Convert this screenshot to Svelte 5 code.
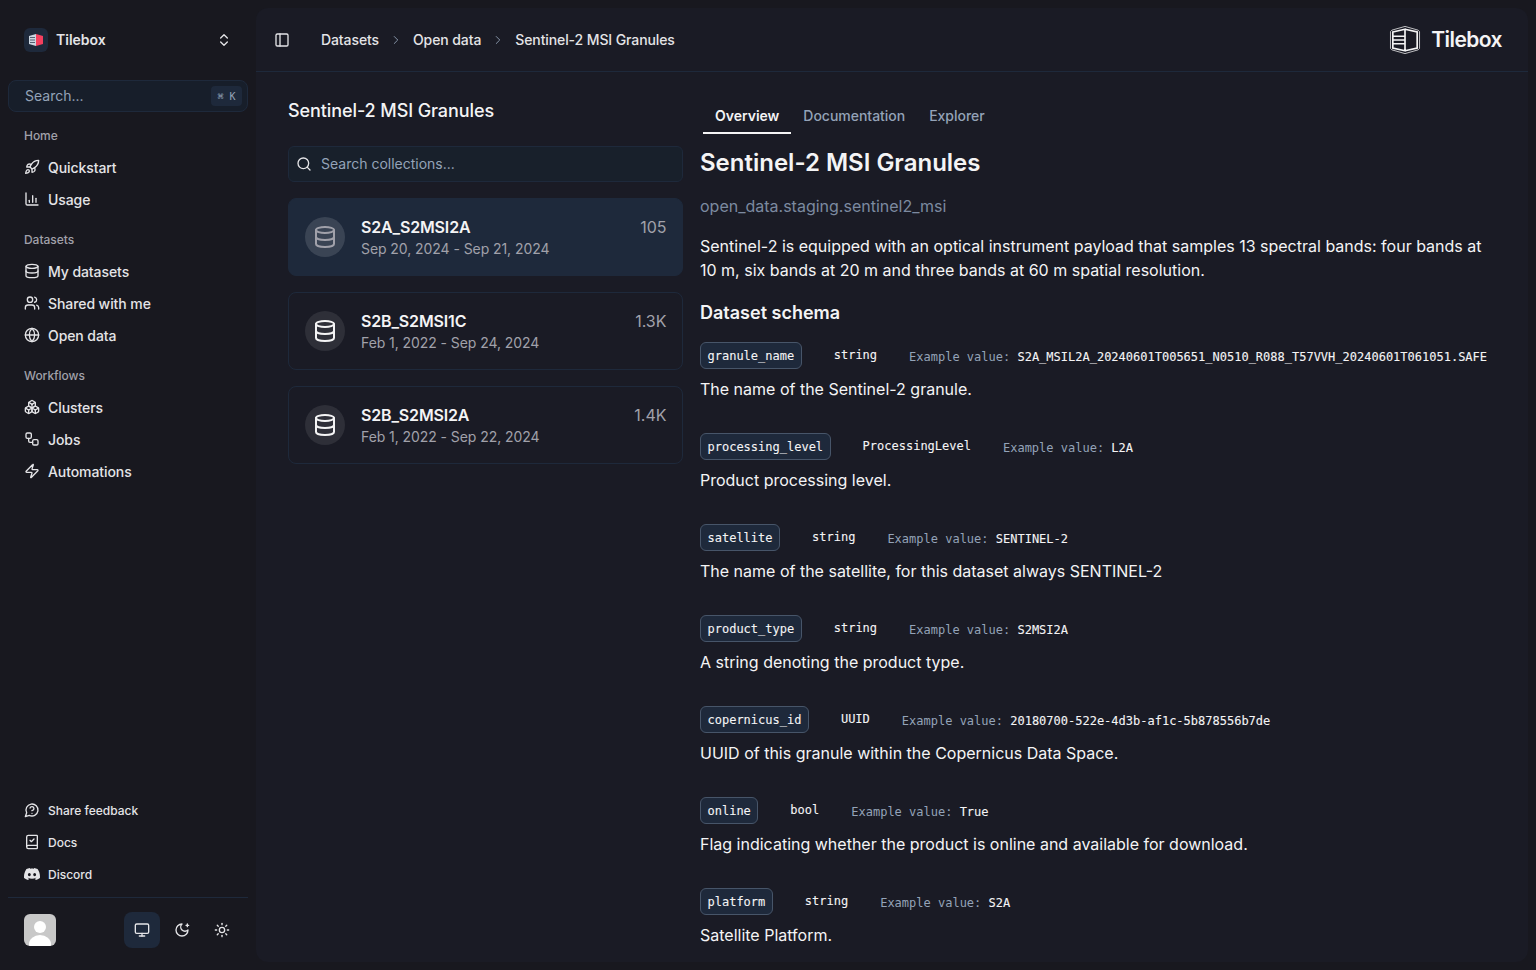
<script>
  const c = (x, y, r) => `M${x - r} ${y}a${r} ${r} 0 1 0 ${2 * r} 0a${r} ${r} 0 1 0 ${-2 * r} 0Z`;
  const rr = (x, y, w, h, r) =>
    `M${x + r} ${y}h${w - 2 * r}a${r} ${r} 0 0 1 ${r} ${r}v${h - 2 * r}a${r} ${r} 0 0 1 ${-r} ${r}h${-(w - 2 * r)}a${r} ${r} 0 0 1 ${-r} ${-r}v${-(h - 2 * r)}a${r} ${r} 0 0 1 ${r} ${-r}Z`;

  const icons = {
    rocket: ['M4.5 16.5c-1.5 1.26-2 5-2 5s3.74-.5 5-2c.71-.84.7-2.13-.09-2.91a2.18 2.18 0 0 0-2.91-.09z', 'm12 15-3-3a22 22 0 0 1 2-3.95A12.88 12.88 0 0 1 22 2c0 2.72-.78 7.5-6 11a22.35 22.35 0 0 1-4 2z', 'M9 12H4s.55-3.03 2-4c1.62-1.08 5 0 5 0', 'M12 15v5s3.03-.55 4-2c1.08-1.62 0-5 0-5'],
    chart: ['M3 3v16a2 2 0 0 0 2 2h16', 'M8 17v-3', 'M13 17V7', 'M18 17V11'],
    database: ['M3 5a9 3 0 1 0 18 0a9 3 0 1 0 -18 0Z', 'M3 5V19A9 3 0 0 0 21 19V5', 'M3 12A9 3 0 0 0 21 12'],
    users: ['M16 21v-2a4 4 0 0 0-4-4H6a4 4 0 0 0-4 4v2', c(9, 7, 4), 'M22 21v-2a4 4 0 0 0-3-3.87', 'M16 3.13a4 4 0 0 1 0 7.75'],
    globe: [c(12, 12, 10), 'M12 2a14.5 14.5 0 0 0 0 20 14.5 14.5 0 0 0 0-20', 'M2 12h20'],
    boxes: ['M2.97 12.92A2 2 0 0 0 2 14.63v3.24a2 2 0 0 0 .97 1.71l3 1.8a2 2 0 0 0 2.06 0L12 19v-5.5l-5-3-4.03 2.42Z', 'm7 16.5-4.74-2.85', 'm7 16.5 5-3', 'M7 16.5v5.17', 'M12 13.5V19l3.97 2.38a2 2 0 0 0 2.06 0l3-1.8a2 2 0 0 0 .97-1.71v-3.24a2 2 0 0 0-.97-1.71L17 10.5l-5 3Z', 'm17 16.5-5-3', 'm17 16.5 4.74-2.85', 'M17 16.5v5.17', 'M7.97 4.42A2 2 0 0 0 7 6.13v4.37l5 3 5-3V6.13a2 2 0 0 0-.97-1.71l-3-1.8a2 2 0 0 0-2.06 0l-3 1.8Z', 'M12 8 7.26 5.15', 'm12 8 4.74-2.85', 'M12 13.5V8'],
    workflow: [rr(3, 3, 8, 8, 2), 'M7 11v4a2 2 0 0 0 2 2h4', rr(13, 13, 8, 8, 2)],
    zap: ['M4 14a1 1 0 0 1-.78-1.63l9.9-10.2a.5.5 0 0 1 .86.46l-1.92 6.02A1 1 0 0 0 13 10h7a1 1 0 0 1 .78 1.63l-9.9 10.2a.5.5 0 0 1-.86-.46l1.92-6.02A1 1 0 0 0 11 14z'],
    help: ['M7.9 20A9 9 0 1 0 4 16.1L2 22Z', 'M9.09 9a3 3 0 0 1 5.83 1c0 2-3 3-3 3', 'M12 17h.01'],
    book: ['M4 19.5v-15A2.5 2.5 0 0 1 6.5 2H19a1 1 0 0 1 1 1v18a1 1 0 0 1-1 1H6.5a1 1 0 0 1 0-5H20', 'm9 9.5 2 2 4-4'],
    monitor: [rr(2, 3, 20, 14, 2), 'M8 21h8', 'M12 17v4'],
    moon: ['M12 3a6 6 0 0 0 9 9 9 9 0 1 1-9-9Z', 'M20 3v4', 'M22 5h-4'],
    sun: [c(12, 12, 4), 'M12 2v2', 'M12 20v2', 'm4.93 4.93 1.41 1.41', 'm17.66 17.66 1.41 1.41', 'M2 12h2', 'M20 12h2', 'm6.34 17.66-1.41 1.41', 'm19.07 4.93-1.41 1.41'],
    panel: [rr(3, 3, 18, 18, 2), 'M9 3v18'],
    updown: ['m7 15 5 5 5-5', 'm7 9 5-5 5 5'],
    search: [c(11, 11, 8), 'm21 21-4.3-4.3'],
    right: ['m9 18 6-6-6-6']
  };
  const discord = 'M20.317 4.3698a19.7913 19.7913 0 00-4.8851-1.5152.0741.0741 0 00-.0785.0371c-.211.3753-.4447.8648-.6083 1.2495-1.8447-.2762-3.68-.2762-5.4868 0-.1636-.3933-.4058-.8742-.6177-1.2495a.077.077 0 00-.0785-.037 19.7363 19.7363 0 00-4.8852 1.515.0699.0699 0 00-.0321.0277C.5334 9.0458-.319 13.5799.0992 18.0578a.0824.0824 0 00.0312.0561c2.0528 1.5076 4.0413 2.4228 5.9929 3.0294a.0777.0777 0 00.0842-.0276c.4616-.6304.8731-1.2952 1.226-1.9942a.076.076 0 00-.0416-.1057c-.6528-.2476-1.2743-.5495-1.8722-.8923a.077.077 0 01-.0076-.1277c.1258-.0943.2517-.1923.3718-.2914a.0743.0743 0 01.0776-.0105c3.9278 1.7933 8.18 1.7933 12.0614 0a.0739.0739 0 01.0785.0095c.1202.099.246.1981.3728.2924a.077.077 0 01-.0066.1276 12.2986 12.2986 0 01-1.873.8914.0766.0766 0 00-.0407.1067c.3604.698.7719 1.3628 1.225 1.9932a.076.076 0 00.0842.0286c1.961-.6067 3.9495-1.5219 6.0023-3.0294a.077.077 0 00.0313-.0552c.5004-5.177-.8382-9.6739-3.5485-13.6604a.061.061 0 00-.0312-.0286zM8.02 15.3312c-1.1825 0-2.1569-1.0857-2.1569-2.419 0-1.3332.9555-2.4189 2.157-2.4189 1.2108 0 2.1757 1.0952 2.1568 2.419 0 1.3332-.9555 2.4189-2.1569 2.4189zm7.9748 0c-1.1825 0-2.1569-1.0857-2.1569-2.419 0-1.3332.9554-2.4189 2.1569-2.4189 1.2108 0 2.1757 1.0952 2.1568 2.419 0 1.3332-.946 2.4189-2.1568 2.4189Z';

  const navGroups = [
    { label: 'Home', items: [['rocket', 'Quickstart'], ['chart', 'Usage']] },
    { label: 'Datasets', items: [['database', 'My datasets'], ['users', 'Shared with me'], ['globe', 'Open data']] },
    { label: 'Workflows', items: [['boxes', 'Clusters'], ['workflow', 'Jobs'], ['zap', 'Automations']] }
  ];
  const collections = [
    { name: 'S2A_S2MSI2A', range: 'Sep 20, 2024 - Sep 21, 2024', count: '105', active: true },
    { name: 'S2B_S2MSI1C', range: 'Feb 1, 2022 - Sep 24, 2024', count: '1.3K' },
    { name: 'S2B_S2MSI2A', range: 'Feb 1, 2022 - Sep 22, 2024', count: '1.4K' }
  ];
  const fields = [
    { name: 'granule_name', type: 'string', ex: 'S2A_MSIL2A_20240601T005651_N0510_R088_T57VVH_20240601T061051.SAFE', desc: 'The name of the Sentinel-2 granule.' },
    { name: 'processing_level', type: 'ProcessingLevel', ex: 'L2A', desc: 'Product processing level.' },
    { name: 'satellite', type: 'string', ex: 'SENTINEL-2', desc: 'The name of the satellite, for this dataset always SENTINEL-2' },
    { name: 'product_type', type: 'string', ex: 'S2MSI2A', desc: 'A string denoting the product type.' },
    { name: 'copernicus_id', type: 'UUID', ex: '20180700-522e-4d3b-af1c-5b878556b7de', desc: 'UUID of this granule within the Copernicus Data Space.' },
    { name: 'online', type: 'bool', ex: 'True', desc: 'Flag indicating whether the product is online and available for download.' },
    { name: 'platform', type: 'string', ex: 'S2A', desc: 'Satellite Platform.' }
  ];
</script>

{#snippet icon(name, cls)}
  <svg class={cls} viewBox="0 0 24 24" fill="none" stroke="currentColor" stroke-linecap="round" stroke-linejoin="round">
    {#each icons[name] as d}<path {d} />{/each}
  </svg>
{/snippet}

<div class="app">
  <aside class="sidebar">
    <div class="team">
      <div class="team-logo">
        <svg viewBox="0 0 16 14" width="16" height="14">
          <path d="M1 3l7-2v12l-7-2z" fill="#cbd5e1" />
          <path d="M2 4.500h5M2 7h5M2 9.500h5" stroke="#334155" stroke-width=".8" />
          <path d="M8 1l7 2v8l-7 2z" fill="#f43f5e" />
        </svg>
      </div>
      <span class="team-name">Tilebox</span>
      {@render icon('updown', 'ic16 updown')}
    </div>

    <div class="side-search">
      <span>Search...</span>
      <kbd>⌘ K</kbd>
    </div>

    <nav class="nav">
      {#each navGroups as g}
        <div class="group">
          <div class="group-label">{g.label}</div>
          {#each g.items as [ic, label]}
            <div class="item">{@render icon(ic, 'ic16')}<span>{label}</span></div>
          {/each}
        </div>
      {/each}
    </nav>

    <div class="bottom">
      <div class="item small">{@render icon('help', 'ic16')}<span>Share feedback</span></div>
      <div class="item small">{@render icon('book', 'ic16')}<span>Docs</span></div>
      <div class="item small">
        <svg class="ic16 discord" viewBox="0 0 24 24" fill="currentColor"><path d={discord} /></svg>
        <span>Discord</span>
      </div>
    </div>

    <div class="footer">
      <div class="avatar">
        <svg viewBox="0 0 32 32" width="32" height="32">
          <circle cx="16" cy="13" r="6" fill="#fff" />
          <ellipse cx="16" cy="30" rx="11" ry="9" fill="#fff" />
        </svg>
      </div>
      <div class="themes">
        <div class="theme on">{@render icon('monitor', 'ic16')}</div>
        <div class="theme">{@render icon('moon', 'ic16')}</div>
        <div class="theme">{@render icon('sun', 'ic16')}</div>
      </div>
    </div>
  </aside>

  <main class="panel">
    <header class="topbar">
      {@render icon('panel', 'ic16 toggle')}
      <div class="crumbs">
        <span>Datasets</span>
        {@render icon('right', 'ic14')}
        <span>Open data</span>
        {@render icon('right', 'ic14')}
        <span>Sentinel-2 MSI Granules</span>
      </div>
      <div class="brand">
        <svg viewBox="0 0 34 32" width="32" height="30" fill="none" stroke="#f4f4f5">
          <path d="M17 1.500 31 5.500 32.500 7v18L31 26.500 17 30.500 3 26.500 1.500 25V7L3 5.500z" stroke-width=".8" />
          <path d="M4 7.500 17 4.500v23L4 24.500zM17 4.500 30 7.500v17L17 27.500" stroke-width="1.800" />
          <path d="M4 12h13M4 16h13M4 20h13" stroke-width="1.800" />
        </svg>
        <span>Tilebox</span>
      </div>
    </header>

    <div class="content">
      <section class="left">
        <h2>Sentinel-2 MSI Granules</h2>
        <div class="col-search">
          {@render icon('search', 'ic16')}
          <span>Search collections...</span>
        </div>
        <div class="cards">
          {#each collections as col}
            <div class="card" class:active={col.active}>
              <div class="disc">{@render icon('database', 'ic24')}</div>
              <div class="card-text">
                <div class="card-name">{col.name}</div>
                <div class="card-range">{col.range}</div>
              </div>
              <div class="card-count">{col.count}</div>
            </div>
          {/each}
        </div>
      </section>

      <section class="right">
        <div class="tabs">
          <div class="tab on">Overview</div>
          <div class="tab">Documentation</div>
          <div class="tab">Explorer</div>
        </div>
        <h1>Sentinel-2 MSI Granules</h1>
        <div class="slug">open_data.staging.sentinel2_msi</div>
        <p class="intro">Sentinel-2 is equipped with an optical instrument payload that samples 13 spectral bands: four bands at 10 m, six bands at 20 m and three bands at 60 m spatial resolution.</p>
        <h3>Dataset schema</h3>
        {#each fields as f}
          <div class="field">
            <div class="field-head">
              <code class="badge">{f.name}</code>
              <code class="type">{f.type}</code>
              <code class="example"><span>Example value:&nbsp;</span>{f.ex}</code>
            </div>
            <div class="desc">{f.desc}</div>
          </div>
        {/each}
      </section>
    </div>
  </main>
</div>

<style>
  :global(body) {
    margin: 0;
    background: #18181f;
    font-family: Inter, 'Noto Sans', sans-serif;
    color: #f4f4f5;
  }
  .app {
    display: flex;
    height: 970px;
    overflow: hidden;
  }
  .ic14 { width: 14px; height: 14px; stroke-width: 1.5; flex: none; }
  .ic16 { width: 16px; height: 16px; stroke-width: 2; flex: none; }
  .ic24 { width: 24px; height: 24px; stroke-width: 2; flex: none; }

  .sidebar {
    width: 256px;
    flex: none;
    display: flex;
    flex-direction: column;
    box-sizing: border-box;
    padding: 0 8px;
  }
  .team {
    height: 24px;
    margin-top: 28px;
    padding: 0 16px;
    display: flex;
    align-items: center;
    gap: 8px;
  }
  .team-logo {
    width: 24px;
    height: 24px;
    border-radius: 6px;
    background: #1e293b;
    display: flex;
    align-items: center;
    justify-content: center;
  }
  .team-name { font-size: 14px; line-height: 22px; padding-top: 1px; padding-bottom: 2px; font-weight: 600; color: #e4e4e7; flex: 1; }
  .team :global(.updown) { color: #e4e4e7; }
  .side-search {
    margin-top: 28px;
    height: 32px;
    box-sizing: border-box;
    border: 1px solid #1e293b;
    background: #171e2a;
    border-radius: 8px;
    padding: 0 5px 2px 16px;
    display: flex;
    align-items: center;
    justify-content: space-between;
    font-size: 14px;
    color: #94a3b8;
  }
  kbd {
    font-family: 'DejaVu Sans Mono', monospace;
    font-size: 10px;
    background: #1e293b;
    color: #94a3b8;
    border-radius: 4px;
    width: 31px;
    height: 20px;
    margin-top: 2px;
    display: flex;
    align-items: center;
    justify-content: center;
  }
  .nav { margin-top: 7px; flex: 1; }
  .group { margin-bottom: 8px; }
  .group-label {
    height: 32px;
    padding: 0 16px;
    display: flex;
    align-items: center;
    font-size: 12px;
    font-weight: 500;
    letter-spacing: -0.04px;
    color: #a1a1aa;
  }
  .item {
    height: 32px;
    padding: 0 16px;
    display: flex;
    align-items: center;
    gap: 8px;
    font-size: 14px;
    font-weight: 500;
    letter-spacing: -0.08px;
    color: #e4e4e7;
  }
  .item.small { font-size: 12px; letter-spacing: 0; }
  .bottom { margin-bottom: 7px; }
  .discord { stroke: none; }
  .footer {
    border-top: 1px solid #1e293b;
    height: 73px;
    box-sizing: border-box;
    padding: 0 8px 9px 16px;
    display: flex;
    align-items: center;
    justify-content: space-between;
  }
  .avatar {
    width: 32px;
    height: 32px;
    border-radius: 6px;
    background: #c8c8c8;
    overflow: hidden;
  }
  .avatar svg { display: block; }
  .themes { display: flex; gap: 4px; }
  .theme {
    width: 36px;
    height: 36px;
    border-radius: 8px;
    display: flex;
    align-items: center;
    justify-content: center;
    color: #e4e4e7;
  }
  .theme.on { background: #1e293b; }

  .panel {
    flex: none;
    width: 1272px;
    height: 954px;
    margin-top: 8px;
    background: #1a1b25;
    border-radius: 12px;
    overflow: hidden;
  }
  .topbar {
    height: 64px;
    box-sizing: border-box;
    border-bottom: 1px solid #1e293b;
    padding: 0 26px 0 18px;
    display: flex;
    align-items: center;
  }
  .topbar :global(.toggle) { color: #e4e4e7; }
  .crumbs {
    margin-left: 31px;
    display: flex;
    align-items: center;
    gap: 10px;
    font-size: 14px;
    font-weight: 500;
    letter-spacing: -0.1px;
    color: #e4e4e7;
    flex: 1;
  }
  .crumbs :global(svg) { color: #94a3b8; }
  .brand {
    display: flex;
    align-items: center;
    gap: 10px;
    font-size: 21px;
    line-height: 24px;
    font-weight: 600;
    letter-spacing: -0.55px;
    color: #f4f4f5;
  }
  .content {
    padding: 24px 32px 0;
    display: grid;
    grid-template-columns: 395px 1fr;
    column-gap: 17px;
  }
  h2 {
    margin: 0;
    font-size: 18px;
    line-height: 30px;
    font-weight: 500;
    letter-spacing: -0.09px;
    color: #f4f4f5;
  }
  .col-search {
    margin-top: 20px;
    height: 36px;
    box-sizing: border-box;
    border: 1px solid #1e293b;
    border-radius: 6px;
    background: #18202b;
    padding: 0 7px 1px;
    display: flex;
    align-items: center;
    gap: 9px;
    font-size: 14px;
    color: #94a3b8;
  }
  .col-search :global(svg) { color: #e4e4e7; }
  .cards {
    margin-top: 16px;
    display: flex;
    flex-direction: column;
    gap: 16px;
  }
  .card {
    height: 78px;
    box-sizing: border-box;
    border: 1px solid #1e293b;
    border-radius: 8px;
    padding: 16px 15.500px 16px 16px;
    display: flex;
    align-items: flex-start;
    gap: 16px;
  }
  .card.active { background: #1e293b; }
  .disc {
    width: 40px;
    height: 40px;
    border-radius: 50%;
    background: #2e2f38;
    display: flex;
    align-items: center;
    justify-content: center;
    color: #f4f4f5;
    margin-top: 2px;
  }
  .card.active .disc { background: #3a4454; color: #a1a1aa; }
  .card-text { flex: 1; }
  .card-name { font-size: 16px; line-height: 24px; font-weight: 600; letter-spacing: -0.15px; color: #f4f4f5; }
  .card-range { font-size: 14px; line-height: 20px; letter-spacing: -0.07px; color: #a1a1aa; }
  .card-count { font-size: 16px; line-height: 24px; color: #a1a1aa; }

  .tabs {
    display: flex;
    padding-left: 3px;
    height: 38px;
    box-sizing: border-box;
  }
  .tab {
    padding: 8px 12px 0;
    font-size: 14px;
    line-height: 24px;
    font-weight: 500;
    letter-spacing: -0.02px;
    color: #94a3b8;
    border-bottom: 2px solid transparent;
  }
  .tab.on { color: #f4f4f5; font-weight: 600; border-bottom-color: #f4f4f5; }
  h1 {
    margin: 13px 0 0;
    font-size: 24px;
    line-height: 32px;
    font-weight: 600;
    color: #f4f4f5;
  }
  .slug {
    margin-top: 15px;
    font-size: 16px;
    line-height: 24px;
    color: #7c8aa0;
  }
  .intro {
    margin: 16px 0 0;
    font-size: 16px;
    line-height: 24px;
    color: #f4f4f5;
  }
  h3 {
    margin: 17px 0 15px;
    font-size: 18px;
    line-height: 28px;
    font-weight: 600;
    color: #f4f4f5;
  }
  .field { margin-bottom: 32px; }
  .field-head {
    display: flex;
    align-items: center;
    gap: 32px;
    height: 27px;
  }
  code {
    font-family: 'DejaVu Sans Mono', monospace;
    font-size: 12px;
    color: #f4f4f5;
    -webkit-text-stroke: 0.1px currentColor;
  }
  .badge {
    box-sizing: border-box;
    height: 27px;
    line-height: 26px;
    padding: 0 6.5px;
    border: 1.5px solid #475569;
    border-radius: 6px;
    background: #1e293b;
  }
  .type { position: relative; top: -1px; }
  .example span { color: #94a3b8; -webkit-text-stroke: 0; }
  .example { position: relative; top: 1px; }
  .desc {
    margin-top: 8px;
    font-size: 16px;
    line-height: 24px;
    color: #f4f4f5;
  }
</style>
